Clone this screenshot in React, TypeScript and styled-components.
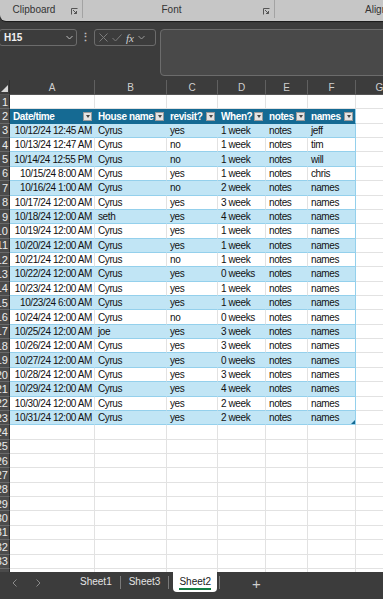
import React from 'react';
import styled, { createGlobalStyle } from 'styled-components';

const GlobalStyle = createGlobalStyle`
  html, body {
    margin: 0;
    padding: 0;
    background: #3c3c3c;
  }
  body {
    font-family: "Liberation Sans", Arial, sans-serif;
  }
`;

const Frame = styled.div`
  width: 383px;
  height: 599px;
  display: flex;
  flex-direction: column;
  overflow: hidden;
  background: #3c3c3c;
`;

/* ---------- ribbon ---------- */

const Ribbon = styled.div`
  height: 21px;
  flex: none;
  display: flex;
  background: #c6c6c6;
  border-bottom-left-radius: 6px;
  box-shadow: 0 1px 1px rgba(0, 0, 0, 0.6);
  overflow: hidden;
`;

const RibbonGroup = styled.div<{ $width: number; $shift?: number }>`
  width: ${p => p.$width}px;
  flex: none;
  position: relative;
  display: flex;
  align-items: flex-end;
  justify-content: center;
  padding-bottom: 3px;
  padding-right: ${p => p.$shift || 0}px;
  box-sizing: border-box;
  border-right: 1px solid #a3a3a3;
  margin-bottom: 3px;
  font-size: 10px;
  color: #333;
`;

const RibbonTail = styled.div`
  flex: 1;
  display: flex;
  align-items: flex-end;
  padding: 0 0 6px 90px;
  font-size: 10px;
  color: #333;
  white-space: nowrap;
`;

const Launcher = styled.svg`
  position: absolute;
  right: 4px;
  bottom: 3px;
`;

/* ---------- formula bar ---------- */

const FormulaBar = styled.div`
  height: 59px;
  flex: none;
  display: flex;
  align-items: flex-start;
  padding-top: 8px;
  box-sizing: border-box;
  gap: 4px;
`;

const NameBox = styled.div`
  width: 78px;
  height: 17px;
  margin-left: -1px;
  box-sizing: border-box;
  border: 1px solid #6c6c6c;
  border-radius: 3px;
  display: flex;
  align-items: center;
  justify-content: space-between;
  padding: 0 3px 0 4px;
  color: #f0f0f0;
  font-size: 10px;
  font-weight: bold;
`;

const Dots = styled.div`
  width: 9px;
  height: 17px;
  display: flex;
  align-items: center;
  justify-content: center;
  color: #bdbdbd;
  font-size: 11px;
  font-weight: bold;
`;

const FxBox = styled.div`
  width: 62px;
  height: 17px;
  box-sizing: border-box;
  border: 1px solid #6c6c6c;
  border-radius: 3px;
  display: flex;
  align-items: center;
  gap: 4px;
  padding: 0 2px 0 4px;
  color: #7c7c7c;
`;

const Fx = styled.span`
  font-family: "Liberation Serif", serif;
  font-style: italic;
  font-size: 11px;
  color: #d0d0d0;
`;

const FormulaInput = styled.div`
  flex: 1;
  height: 47px;
  margin-right: -4px;
  box-sizing: border-box;
  border: 1px solid #6c6c6c;
  border-radius: 4px;
  background: #494949;
`;

/* ---------- sheet ---------- */

const COLS = '10px 85px 72px 51px 48px 42px 48px 48px';

const Sheet = styled.div`
  flex: 1;
  overflow: hidden;
  background: #fff;
`;

const Row = styled.div<{ $h: number }>`
  display: grid;
  grid-template-columns: ${COLS};
  height: ${p => p.$h}px;
`;

const ColHead = styled.div`
  background: #3c3c3c;
  color: #cfcfcf;
  font-size: 10px;
  display: flex;
  align-items: center;
  justify-content: center;
  border-right: 1px solid #606060;
  border-bottom: 1px solid #555;
  box-sizing: border-box;
`;

const Corner = styled(ColHead)`
  position: relative;
  border-right: 1px solid #2c2c2c;
`;

const CornerMark = styled.div`
  position: absolute;
  right: 1px;
  bottom: 2px;
  width: 0;
  height: 0;
  border-left: 7px solid transparent;
  border-bottom: 7px solid #d8d8d8;
`;

const RowHead = styled.div`
  background: #4b4b4b;
  color: #ececec;
  font-size: 11px;
  display: flex;
  align-items: center;
  justify-content: flex-end;
  overflow: hidden;
  white-space: nowrap;
  border-bottom: 1px solid #6a6a6a;
  border-right: 1px solid #2c2c2c;
  box-sizing: border-box;
  padding-right: 1px;
`;

type Kind = 'plain' | 'head' | 'band' | 'white';

const cellBg: Record<Kind, string> = {
  plain: '#fff',
  head: '#156a93',
  band: '#c1e5f5',
  white: '#fff',
};

const lineColor = (kind: Kind) =>
  kind === 'plain' ? '#e2e2e2' : kind === 'head' ? '#156a93' : '#94d0ec';

const sideColor = (kind: Kind, edge?: boolean) =>
  edge ? '#94d0ec' : kind === 'band' ? '#c1e5f5' : kind === 'head' ? '#156a93' : '#e2e2e2';

const Cell = styled.div<{ $kind: Kind; $right?: boolean; $edge?: boolean }>`
  position: relative;
  background: ${p => cellBg[p.$kind]};
  color: ${p => (p.$kind === 'head' ? '#fff' : '#111')};
  font-weight: ${p => (p.$kind === 'head' ? 'bold' : 'normal')};
  font-size: 10px;
  letter-spacing: -0.4px;
  display: flex;
  align-items: center;
  justify-content: ${p => (p.$right ? 'flex-end' : 'flex-start')};
  padding: 0 2px 0 3px;
  white-space: nowrap;
  overflow: hidden;
  box-sizing: border-box;
  border-bottom: 1px solid ${p => lineColor(p.$kind)};
  border-right: 1px solid ${p => sideColor(p.$kind, p.$edge)};
`;

const FilterBtn = styled.div`
  margin-left: auto;
  flex: none;
  width: 9px;
  height: 9px;
  box-sizing: border-box;
  background: #e4e4e4;
  border: 1px solid #9a9a9a;
  display: flex;
  align-items: center;
  justify-content: center;
`;

const Arrow = styled.div`
  width: 0;
  height: 0;
  border-left: 2.5px solid transparent;
  border-right: 2.5px solid transparent;
  border-top: 3px solid #444;
`;

const ResizeMark = styled.div`
  position: absolute;
  right: 0;
  bottom: 0;
  width: 0;
  height: 0;
  border-left: 4px solid transparent;
  border-bottom: 4px solid #156a93;
`;

/* ---------- tab bar ---------- */

const TabBar = styled.div`
  height: 27px;
  flex: none;
  display: flex;
  align-items: flex-start;
  background: #3c3c3c;
  font-size: 10px;
  padding-left: 2px;
`;

const NavArrow = styled.div`
  width: 24px;
  height: 22px;
  display: flex;
  align-items: center;
  justify-content: center;
  color: #8a8a8a;
`;

const Tab = styled.div<{ $active?: boolean }>`
  height: 20px;
  display: flex;
  align-items: center;
  padding: ${p => (p.$active ? '0 6px' : '0 8px')};
  margin: ${p => (p.$active ? '0 2px 0 4px' : '0')};
  color: ${p => (p.$active ? '#222' : '#e4e4e4')};
  background: ${p => (p.$active ? '#fff' : 'transparent')};
  border-radius: 0 0 4px 4px;
`;

const TabLabel = styled.span<{ $active?: boolean }>`
  padding: 2px 0 1px;
  border-bottom: 2px solid ${p => (p.$active ? '#107c41' : 'transparent')};
`;

const TabSep = styled.div`
  width: 1px;
  height: 13px;
  margin-top: 4px;
  background: #7a7a7a;
`;

const AddTab = styled.div`
  margin-left: 32px;
  height: 22px;
  display: flex;
  align-items: center;
  color: #cfcfcf;
  font-size: 15px;
`;

/* ---------- data ---------- */

const headers = ['Date/time', 'House name', 'revisit?', 'When?', 'notes', 'names'];

const data: string[][] = [
  ['10/12/24 12:45 AM', 'Cyrus', 'yes', '1 week', 'notes', 'jeff'],
  ['10/13/24 12:47 AM', 'Cyrus', 'no', '1 week', 'notes', 'tim'],
  ['10/14/24 12:55 PM', 'Cyrus', 'no', '1 week', 'notes', 'will'],
  ['10/15/24 8:00 AM', 'Cyrus', 'yes', '1 week', 'notes', 'chris'],
  ['10/16/24 1:00 AM', 'Cyrus', 'no', '2 week', 'notes', 'names'],
  ['10/17/24 12:00 AM', 'Cyrus', 'yes', '3 week', 'notes', 'names'],
  ['10/18/24 12:00 AM', 'seth', 'yes', '4 week', 'notes', 'names'],
  ['10/19/24 12:00 AM', 'Cyrus', 'yes', '1 week', 'notes', 'names'],
  ['10/20/24 12:00 AM', 'Cyrus', 'yes', '1 week', 'notes', 'names'],
  ['10/21/24 12:00 AM', 'Cyrus', 'no', '1 week', 'notes', 'names'],
  ['10/22/24 12:00 AM', 'Cyrus', 'yes', '0 weeks', 'notes', 'names'],
  ['10/23/24 12:00 AM', 'Cyrus', 'yes', '1 week', 'notes', 'names'],
  ['10/23/24 6:00 AM', 'Cyrus', 'yes', '1 week', 'notes', 'names'],
  ['10/24/24 12:00 AM', 'Cyrus', 'no', '0 weeks', 'notes', 'names'],
  ['10/25/24 12:00 AM', 'joe', 'yes', '3 week', 'notes', 'names'],
  ['10/26/24 12:00 AM', 'Cyrus', 'yes', '3 week', 'notes', 'names'],
  ['10/27/24 12:00 AM', 'Cyrus', 'yes', '0 weeks', 'notes', 'names'],
  ['10/28/24 12:00 AM', 'Cyrus', 'yes', '3 week', 'notes', 'names'],
  ['10/29/24 12:00 AM', 'Cyrus', 'yes', '4 week', 'notes', 'names'],
  ['10/30/24 12:00 AM', 'Cyrus', 'yes', '2 week', 'notes', 'names'],
  ['10/31/24 12:00 AM', 'Cyrus', 'yes', '2 week', 'notes', 'names'],
];

const ROW_H = 14.36;
const TOTAL_ROWS = 34;

const Chevron = ({ color = '#bdbdbd' }: { color?: string }) => (
  <svg width="7" height="5" viewBox="0 0 7 5">
    <path d="M0.5 1 L3.5 4 L6.5 1" fill="none" stroke={color} strokeWidth="1" />
  </svg>
);

const LauncherIcon = () => (
  <Launcher width="7" height="7" viewBox="0 0 7 7">
    <path d="M0.5 6.5 V0.5 H6.5" fill="none" stroke="#555" strokeWidth="1" />
    <path d="M2 2 L5.5 5.5 M5.5 3 V5.5 H3" fill="none" stroke="#555" strokeWidth="1" />
  </Launcher>
);

const App: React.FC = () => {
  const renderRow = (r: number) => {
    let cells: React.ReactNode[] = [];

    if (r === 2) {
      cells = headers.map((h, i) => (
        <Cell key={i} $kind="head" $edge={i === 5}>
          {h}
          <FilterBtn>
            <Arrow />
          </FilterBtn>
        </Cell>
      ));
      cells.push(<Cell key="g" $kind="plain" />);
    } else if (r >= 3 && r <= 23) {
      const row = data[r - 3];
      const kind: Kind = r % 2 === 1 ? 'band' : 'white';
      cells = row.map((v, i) => (
        <Cell key={i} $kind={kind} $right={i === 0} $edge={i === 5}>
          {v}
          {r === 23 && i === 5 && <ResizeMark />}
        </Cell>
      ));
      cells.push(<Cell key="g" $kind="plain" />);
    } else {
      cells = Array.from({ length: 7 }, (_, i) => <Cell key={i} $kind="plain" />);
    }

    return (
      <Row key={r} $h={ROW_H}>
        <RowHead>{r}</RowHead>
        {cells}
      </Row>
    );
  };

  return (
    <Frame>
      <GlobalStyle />
      <Ribbon>
        <RibbonGroup $width={83} $shift={14}>
          Clipboard
          <LauncherIcon />
        </RibbonGroup>
        <RibbonGroup $width={192} $shift={14}>
          Font
          <LauncherIcon />
        </RibbonGroup>
        <RibbonTail>Alignment</RibbonTail>
      </Ribbon>

      <FormulaBar>
        <NameBox>
          H15
          <Chevron />
        </NameBox>
        <Dots>⋮</Dots>
        <FxBox>
          <svg width="9" height="9" viewBox="0 0 9 9">
            <path d="M0.5 0.5 L8.5 8.5 M8.5 0.5 L0.5 8.5" stroke="#7c7c7c" strokeWidth="1" />
          </svg>
          <svg width="10" height="8" viewBox="0 0 10 8">
            <path d="M0.5 4 L3.5 7 L9.5 0.5" fill="none" stroke="#7c7c7c" strokeWidth="1" />
          </svg>
          <Fx>fx</Fx>
          <Chevron color="#9a9a9a" />
        </FxBox>
        <FormulaInput />
      </FormulaBar>

      <Sheet>
        <Row $h={15}>
          <Corner>
            <CornerMark />
          </Corner>
          {['A', 'B', 'C', 'D', 'E', 'F', 'G'].map(c => (
            <ColHead key={c}>{c}</ColHead>
          ))}
        </Row>
        {Array.from({ length: TOTAL_ROWS }, (_, i) => renderRow(i + 1))}
      </Sheet>

      <TabBar>
        <NavArrow>
          <svg width="5" height="8" viewBox="0 0 5 8">
            <path d="M4.5 0.5 L1 4 L4.5 7.5" fill="none" stroke="#8a8a8a" strokeWidth="1" />
          </svg>
        </NavArrow>
        <NavArrow>
          <svg width="5" height="8" viewBox="0 0 5 8">
            <path d="M0.5 0.5 L4 4 L0.5 7.5" fill="none" stroke="#8a8a8a" strokeWidth="1" />
          </svg>
        </NavArrow>
        <div style={{ width: 22 }} />
        <Tab>
          <TabLabel>Sheet1</TabLabel>
        </Tab>
        <TabSep />
        <Tab>
          <TabLabel>Sheet3</TabLabel>
        </Tab>
        <TabSep />
        <Tab $active>
          <TabLabel $active>Sheet2</TabLabel>
        </Tab>
        <TabSep />
        <AddTab>+</AddTab>
      </TabBar>
    </Frame>
  );
};

export default App;
